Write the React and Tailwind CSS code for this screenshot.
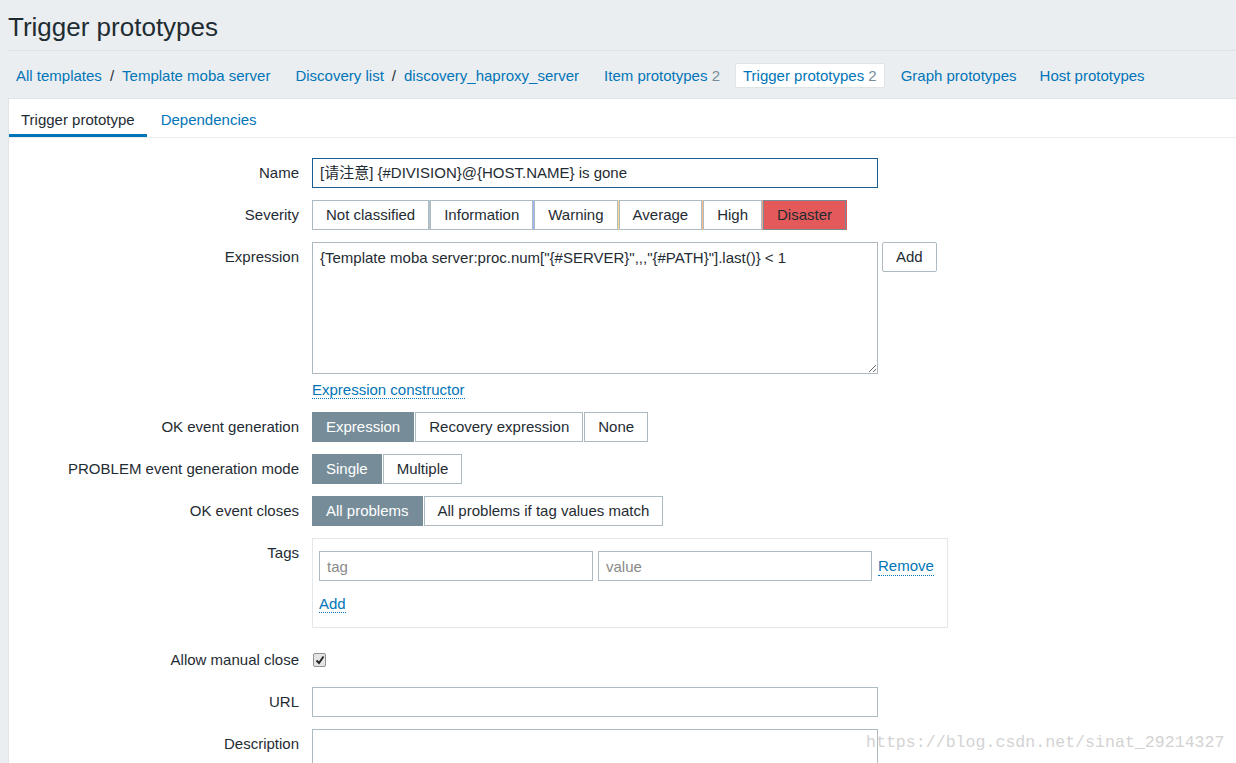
import React from "react";

const FONT = { fontFamily: '"Liberation Sans", Arial, "Noto Sans CJK SC", sans-serif' };

function Label({ children }) {
  return (
    <div className="w-[290px] shrink-0 text-right leading-[30px] text-[#1f2c33]">{children}</div>
  );
}

function Row({ label, children, className = "" }) {
  return (
    <div className={"flex " + className}>
      <Label>{label}</Label>
      <div className="ml-[13px] flex flex-col items-start">{children}</div>
    </div>
  );
}

function DotLink({ children, className = "" }) {
  return (
    <span className={"text-[#0275b8] border-b border-dotted border-[#0275b8] leading-[18px] " + className}>
      {children}
    </span>
  );
}

function Segmented({ items, selected }) {
  return (
    <div className="flex gap-[1px]">
      {items.map((t, i) => (
        <span
          key={t}
          className={
            "h-[30px] px-[13px] leading-[28px] border " +
            (i === selected
              ? "bg-[#768d99] border-[#768d99] text-white"
              : "bg-white border-[#acbbc2] text-[#1f2c33]")
          }
        >
          {t}
        </span>
      ))}
    </div>
  );
}

const severities = [
  { t: "Not classified", c: "bg-[#97aab3]" },
  { t: "Information", c: "bg-[#7499ff]" },
  { t: "Warning", c: "bg-[#ffc859]" },
  { t: "Average", c: "bg-[#ffa059]" },
  { t: "High", c: "bg-[#e97659]" },
  { t: "Disaster", c: "bg-[#e45959]", sel: true },
];

export default function App() {
  return (
    <div style={FONT} className="relative h-[763px] w-full overflow-hidden bg-[#ebeef0] text-[15px] text-[#1f2c33]">
      {/* Title */}
      <div className="ml-[8px] h-[51px] border-b border-[#dde2e6] flex items-center pt-[4px]">
        <h1 className="text-[26px] leading-[30px] font-normal text-[#1f2c33]">Trigger prototypes</h1>
      </div>

      {/* Navigation */}
      <div className="h-[47px] flex items-center pt-[2px] pl-[7px] text-[#0275b8]">
        <span className="px-[9px] leading-[25px]">
          All templates<span className="px-[8px] text-[#1f2c33]">/</span>Template moba server
        </span>
        <span className="ml-[7px] px-[9px] leading-[25px]">
          Discovery list<span className="px-[8px] text-[#1f2c33]">/</span>discovery_haproxy_server
        </span>
        <span className="ml-[7px] px-[9px] leading-[25px]">
          Item prototypes <span className="text-[#768d99]">2</span>
        </span>
        <span className="ml-[6px] px-[7px] leading-[23px] bg-white border border-[#dfe4e7] rounded-[2px]">
          Trigger prototypes <span className="text-[#768d99]">2</span>
        </span>
        <span className="ml-[7px] px-[9px] leading-[25px]">Graph prototypes</span>
        <span className="ml-[5px] px-[9px] leading-[25px]">Host prototypes</span>
      </div>

      {/* Panel */}
      <div className="ml-[8px] bg-white border-l border-t border-[#dfe4e7] h-[700px]">
        {/* Tabs */}
        <div className="flex h-[39px] border-b border-[#ebeef0]">
          <div className="px-[12px] pt-[11px] leading-[20px] border-b-[3px] border-[#0275b8] text-[#1f2c33]">
            Trigger prototype
          </div>
          <div className="ml-[2px] px-[12px] pt-[11px] leading-[20px] text-[#0275b8]">Dependencies</div>
        </div>

        {/* Form */}
        <div className="pt-[20px] flex flex-col gap-[12px]">
          <Row label="Name">
            <div className="w-[566px] h-[30px] border border-[#1b5e90] px-[7px] leading-[28px] text-[#1f2c33]">
              [请注意] {"{#DIVISION}@{HOST.NAME}"} is gone
            </div>
          </Row>

          <Row label="Severity">
            <div className="flex">
              {severities.map((s) => (
                <div key={s.t} className="flex">
                  <span
                    className={
                      "h-[30px] px-[13px] leading-[28px] border " +
                      (s.sel ? "bg-[#e45959] border-[#7a8a94]" : "bg-white border-[#acbbc2]")
                    }
                  >
                    {s.t}
                  </span>
                  <span className={"w-[1px] h-[30px] " + (s.sel ? s.c : s.c + " opacity-70")} />
                </div>
              ))}
            </div>
          </Row>

          <div className="flex">
            <Label>Expression</Label>
            <div className="ml-[13px] flex flex-col items-start">
              <div className="flex items-start gap-[4px]">
                <textarea
                  readOnly
                  defaultValue={'{Template moba server:proc.num["{#SERVER}",,,"{#PATH}"].last()} < 1'}
                  className="w-[566px] h-[132px] border border-[#acbbc2] px-[7px] py-[5px] leading-[20px] text-[15px] text-[#1f2c33] outline-none"
                  style={FONT}
                />
                <span className="h-[30px] px-[13px] leading-[28px] border border-[#acbbc2] rounded-[2px] bg-white">
                  Add
                </span>
              </div>
              <div className="mt-[6px] h-[20px] leading-[20px]">
                <DotLink>Expression constructor</DotLink>
              </div>
            </div>
          </div>

          <Row label="OK event generation">
            <Segmented items={["Expression", "Recovery expression", "None"]} selected={0} />
          </Row>

          <Row label="PROBLEM event generation mode">
            <Segmented items={["Single", "Multiple"]} selected={0} />
          </Row>

          <Row label="OK event closes">
            <Segmented items={["All problems", "All problems if tag values match"]} selected={0} />
          </Row>

          <Row label="Tags">
            <div className="w-[636px] border border-[#e3e7ea] pl-[6px] pt-[12px] pb-[13px]">
              <div className="flex items-center">
                <input
                  readOnly
                  placeholder="tag"
                  className="w-[274px] h-[30px] border border-[#acbbc2] px-[7px] text-[15px] placeholder:text-[#8a8a8a] outline-none"
                  style={FONT}
                />
                <input
                  readOnly
                  placeholder="value"
                  className="ml-[5px] w-[274px] h-[30px] border border-[#acbbc2] px-[7px] text-[15px] placeholder:text-[#8a8a8a] outline-none"
                  style={FONT}
                />
                <DotLink className="ml-[6px]">Remove</DotLink>
              </div>
              <div className="mt-[13px] h-[20px] leading-[20px]">
                <DotLink>Add</DotLink>
              </div>
            </div>
          </Row>

          <div className="flex mt-[5px]">
            <Label>Allow manual close</Label>
            <div className="ml-[14px] h-[30px] flex items-center">
              <span className="w-[13px] h-[14px] border border-[#8f9499] rounded-[2px] bg-[#e4e4e4] flex items-center justify-center">
                <svg width="10" height="10" viewBox="0 0 10 10">
                  <path d="M1.5 5.5 L4 8 L8.5 1.5" stroke="#222" strokeWidth="1.8" fill="none" />
                </svg>
              </span>
            </div>
          </div>

          <Row label="URL">
            <div className="w-[566px] h-[30px] border border-[#acbbc2]" />
          </Row>

          <Row label="Description">
            <div className="w-[566px] h-[90px] border border-[#acbbc2]" />
          </Row>
        </div>
      </div>

      {/* Watermark */}
      <div
        className="absolute left-[866px] top-[731px] leading-[24px] text-[16.6px] text-[#d3d3d3] whitespace-nowrap"
        style={{ fontFamily: '"Liberation Mono", "DejaVu Sans Mono", monospace' }}
      >
        https://blog.csdn.net/sinat_29214327
      </div>
    </div>
  );
}
